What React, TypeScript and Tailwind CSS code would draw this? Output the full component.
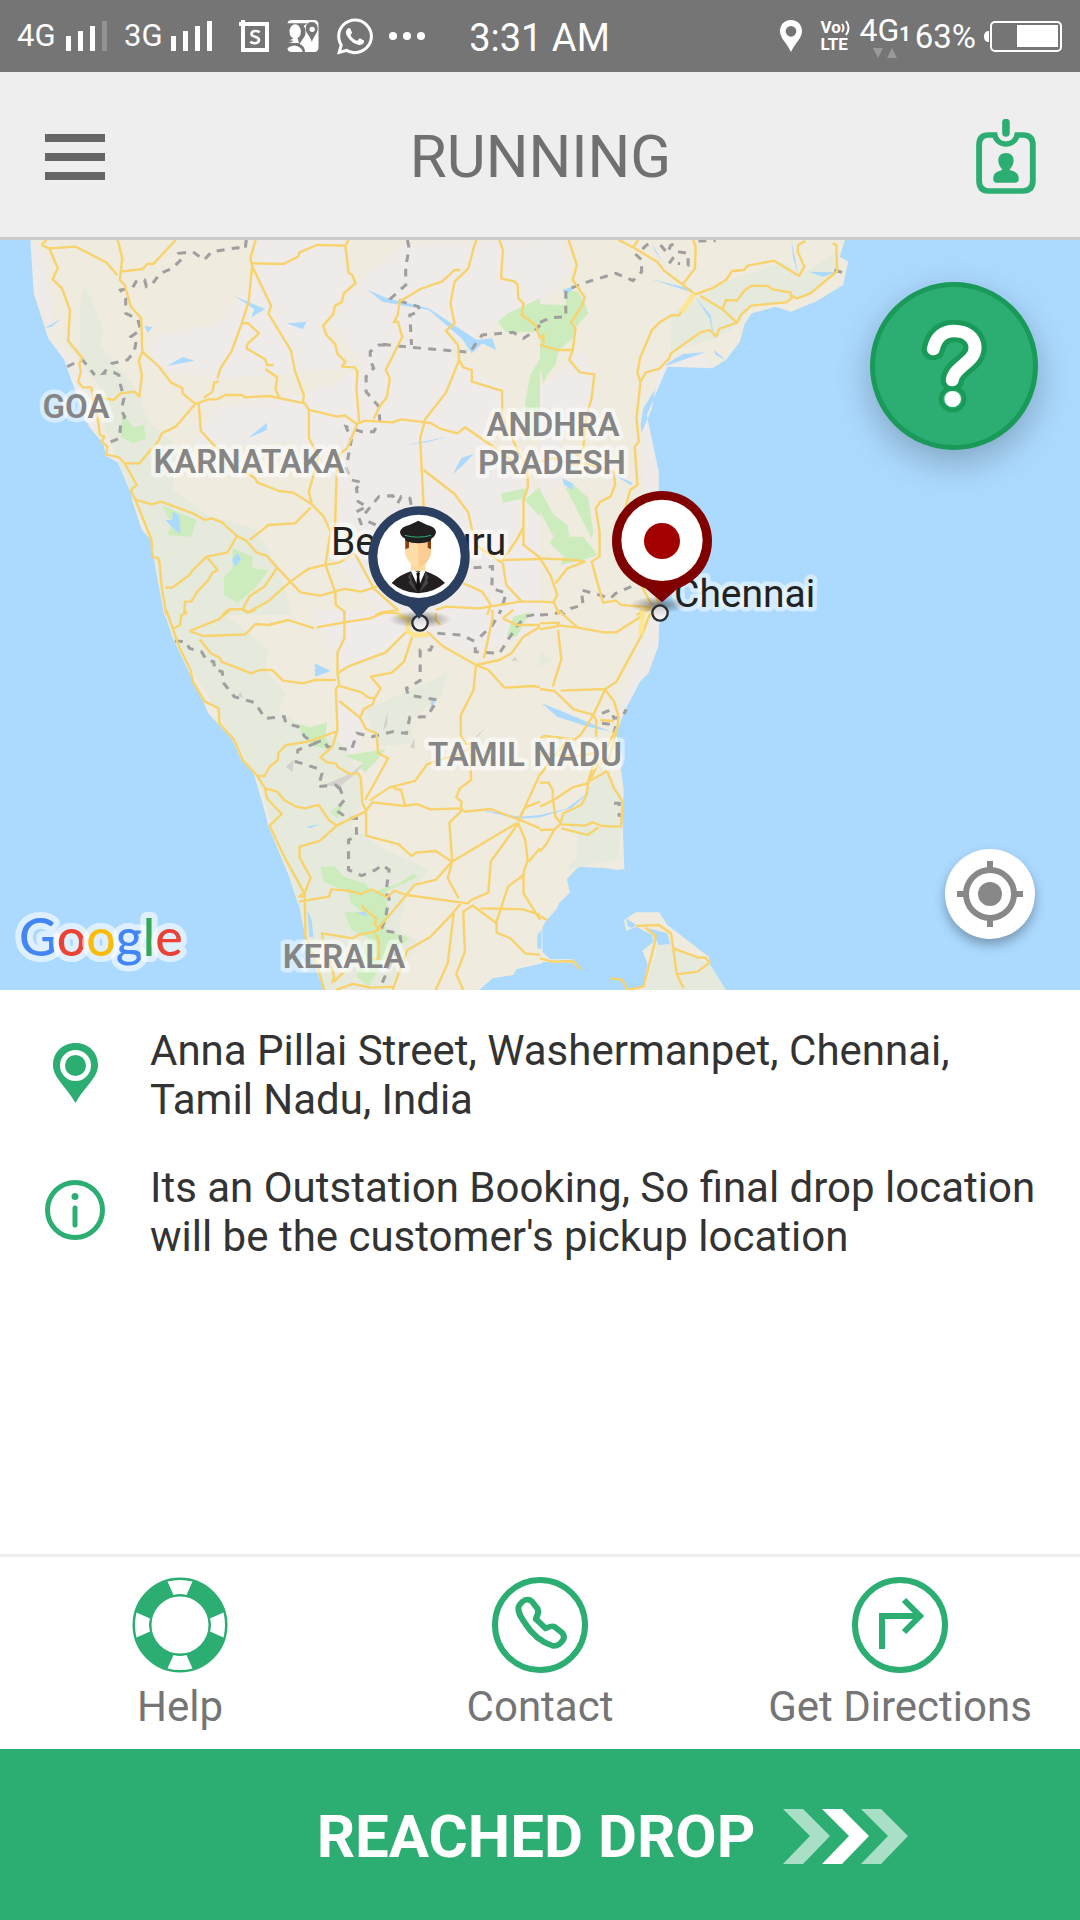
import type { ReactNode } from "react";
import { FaWhatsapp } from "react-icons/fa";

const GREEN = "#2cae73";

function Bars({ faded = false }: { faded?: boolean }) {
  return (
    <svg className="h-[30px] w-[42px]" viewBox="0 0 42 30" fill="#fff" aria-hidden="true">
      <rect x="0" y="15" width="5" height="15" />
      <rect x="12" y="10" width="5" height="20" />
      <rect x="24" y="5" width="5" height="25" />
      <rect x="36" y="0" width="5" height="30" fillOpacity={faded ? 0.22 : 1} />
    </svg>
  );
}

function StatusBar() {
  return (
    <div className="flex h-[72px] shrink-0 items-center bg-[#757575] pr-[18px] pl-[17px] text-white">
      <div className="flex flex-1 items-center">
        <span className="w-[49px] text-[31px] leading-9">4G</span>
        <Bars faded />
        <span className="ml-4 w-[47px] text-[31px] leading-9">3G</span>
        <Bars />
        <svg className="ml-[26px] h-8 w-[30px]" viewBox="0 0 30 32" aria-hidden="true">
          <path d="M4 0V4M0 4H28V30H4V0" fill="none" stroke="#fff" strokeWidth="4" />
          <path d="M20.500 12.500C19 10.200 12.500 10.300 12.500 14C12.500 17.700 20 16 20 20C20 24 13 24 11.500 21.500" fill="none" stroke="#fff" strokeWidth="2.600" />
        </svg>
        <svg className="ml-[18px] h-8 w-8" viewBox="0 0 93 96" aria-hidden="true">
          <path d="M12 0H80Q93 0 93 14V82Q93 96 80 96H52Q54 80 36 71Q42 64 53 46Q57 26 48 18L60 10H0Q2 0 12 0Z" fill="#fff" />
          <ellipse cx="23" cy="35" rx="17" ry="22" fill="#fff" />
          <path d="M17 55H31L34 69H0Q14 68 17 62L0 59Q12 62 17 55Z" fill="#fff" />
          <path d="M0 84Q20 70 36 82Q46 90 45 96H10Q0 94 0 84Z" fill="#fff" />
          <path d="M73 6C53 6 52 29 58 38C67 50 70 56 73 66C76 56 80 50 87 38C95 26 90 6 73 6Z" fill="#757575" />
          <circle cx="74" cy="28" r="8" fill="#fff" />
        </svg>
        <FaWhatsapp className="ml-[18px] h-[41px] w-[36px]" aria-hidden="true" />
        <svg className="ml-4 h-2 w-9" viewBox="0 0 36 8" fill="#fff" aria-hidden="true">
          <circle cx="4" cy="4" r="4" />
          <circle cx="18" cy="4" r="4" />
          <circle cx="32" cy="4" r="4" />
        </svg>
      </div>
      <time className="pt-1 text-[38px] leading-10">3:31 AM</time>
      <div className="flex flex-1 items-center justify-end">
        <svg className="h-8 w-[22px]" viewBox="0 0 66 96" aria-hidden="true">
          <path fillRule="evenodd" d="M33 0C12 0 0 15 0 34C0 55 20 68 33 96C46 68 66 55 66 34C66 15 54 0 33 0ZM33 18A16 16 0 1 1 33 50A16 16 0 1 1 33 18Z" fill="#fff" />
        </svg>
        <div className="ml-[18px] flex w-8 flex-col text-[17px] leading-[17px] font-bold">
          <span className="flex items-center">
            Vo
            <svg className="h-4 w-[9px]" viewBox="0 0 9 16" fill="none" stroke="#fff" strokeWidth="2" aria-hidden="true">
              <path d="M1 4Q4 8 1 12M5 1Q10 8 5 15" />
            </svg>
          </span>
          <span>LTE</span>
        </div>
        <div className="ml-[7px] flex flex-col items-center">
          <span className="flex items-baseline text-[32px] leading-8">
            4G<span className="text-[20px] font-bold">1</span>
          </span>
          <svg className="-mt-0.5 h-[10px] w-6" viewBox="0 0 24 10" fill="#999" aria-hidden="true">
            <path d="M0 0H10L5 10ZM14 10H24L19 0Z" />
          </svg>
        </div>
        <span className="ml-1 pt-0.5 text-[33px] leading-9">63%</span>
        <svg className="ml-2 h-[31px] w-[78px]" viewBox="0 0 78 31" aria-hidden="true">
          <path d="M5 10Q0 10 0 15.500T5 21Z" fill="#fff" />
          <rect x="7" y="1" width="70" height="29" rx="4" fill="none" stroke="#fff" strokeWidth="2" />
          <rect x="33" y="4" width="41" height="22" fill="#fff" />
        </svg>
      </div>
    </div>
  );
}

function Header() {
  return (
    <header className="flex h-[168px] shrink-0 items-center justify-between border-b-3 border-[#cbcbcb] bg-[#eeeeee] pt-1 pr-11 pl-[45px]">
      <button type="button" aria-label="Menu" className="flex flex-col gap-[11px]">
        <span className="h-2 w-[60px] bg-[#666666]" />
        <span className="h-2 w-[60px] bg-[#666666]" />
        <span className="h-2 w-[60px] bg-[#666666]" />
      </button>
      <h1 className="text-[60px] leading-none text-[#707070]">RUNNING</h1>
      <button type="button" aria-label="Driver profile">
        <svg className="h-[75px] w-[60px]" viewBox="0 0 60 75">
          <g transform="scale(.3444 .3333)">
            <path d="M61 46H36Q9 46 9 76V182Q9 214 36 214H136Q165 214 165 182V76Q165 46 136 46H113" transform="translate(0 2)" fill="none" stroke={GREEN} strokeWidth="17" />
            <path d="M54 42C58 86 116 86 120 42" fill="none" stroke={GREEN} strokeWidth="17" />
            <path d="M87 10V42" stroke="#eeeeee" strokeWidth="50" strokeLinecap="round" />
            <path d="M87 10V42" stroke={GREEN} strokeWidth="22" strokeLinecap="round" />
            <path d="M87 102C68 102 64 116 65 128C66 140 74 148 77 152C66 157 50 158 50 180Q50 191 60 191H114Q124 191 124 180C124 158 108 157 97 152C100 148 108 140 109 128C110 116 106 102 87 102Z" fill={GREEN} />
          </g>
        </svg>
      </button>
    </header>
  );
}

/* The map is drawn in four tiles that share one stroke style. */
const NW = "translate(0 235) scale(.3444 .3333)";
const NE = "translate(540 235) scale(.3444 .3333)";
const SW = "translate(0 610) scale(.3444 .3333)";
const SE = "translate(540 610) scale(.3444 .3333)";

const land = [
  { t: NW, d: "M88 0L95 60L108 140L98 175L140 310L187 375L207 435L245 485L258 575L300 625L308 662L345 685L375 740L385 800L412 885L438 915L455 1020L478 1145H1575V0Z" },
  { t: NE, d: "M-5 0H890L870 65L895 80L880 150L800 200L728 230L685 215L615 235L595 265L580 320L540 375L500 400L478 352L415 357L370 385L350 410L333 465L300 520L292 570L300 640L325 710L325 900L340 1100L347 1145H-5Z" },
  { t: SW, d: "M475 0L500 80L590 275L605 310L675 390L700 450L735 485L765 590L780 650L840 800L865 880L880 900L890 1000L925 1090L942 1145H1386L1430 1105L1490 1095L1500 1078L1575 1060V0Z" },
  { t: SE, d: "M-5 0H348L343 110L315 190L290 215L252 290L220 370L240 440L235 480L243 540L240 640L245 778L222 780L195 775L112 770L78 808L87 848L55 880L50 895L20 930L-5 970ZM-5 1015L30 1048L95 1048L118 1080L95 1060L-5 1055ZM244 930L278 907L346 907L370 945L490 1040L495 1070L540 1145H255L300 1130L312 1060L297 1022L330 995L325 975L280 950L250 962Z" },
];

const pale = [
  { t: NW, d: "M720 15H1000L1020 140L940 260L1000 400L780 420L640 430L440 400L440 310L640 260L760 90ZM1060 120L1170 30L1568 15V190L1300 350L1480 480L1400 620L1568 780V1140H1110L960 960L1000 760L840 620L560 640L620 520L880 480L1060 400L960 260ZM88 15L130 60L160 310L240 400L290 600L250 560L187 375L98 175Z" },
  { t: NE, d: "M0 15H60L90 120L0 210ZM0 460L70 400L130 340L170 520L60 600L80 720L0 800ZM325 520L345 400L480 352L500 400L370 395L310 540L345 710V1130L325 1110L292 600Z" },
  { t: SW, d: "M900 0H1568V60L1380 130L1200 80L990 180ZM980 270L1050 330L1050 420L980 440Z" },
  { t: SE, d: "M330 0H348L343 110L252 290L230 300Z" },
];

const sage = [
  { t: NW, d: "M250 155L300 280L290 330L400 470L430 560L520 640L500 760L600 840L740 880L800 980L850 1140H480L440 910L390 800L345 690L300 560L300 470L170 290L230 340L235 180Z" },
  { t: NE, d: "M380 240L540 140L710 80L760 120L860 50L870 110L760 190L610 215L575 270L510 310L380 350Z" },
  { t: SW, d: "M480 0H640L780 120L770 180L830 250L810 300L880 350L970 380L1010 420L1060 540L1020 650L1120 720L1250 780L1180 850L1160 960L1220 1000L1120 1140H940L890 1000L865 870L740 490L680 390L500 80ZM1060 300L1300 190L1280 260L1190 330L1200 400L1100 410Z" },
  { t: SE, d: "M0 120L35 150L0 170ZM60 630L190 480L240 560L235 690L228 745L75 780L110 740V670ZM340 1005H385L495 1065L540 1140H300L335 1040Z" },
];

const forest = [
  { t: NW, d: "M1445 260L1475 235L1568 190V290L1470 292ZM1568 370L1540 420L1525 500L1530 620L1568 600ZM355 530L385 575L418 570L423 612L385 625L350 605ZM1455 775L1525 760V790L1460 803ZM1568 755L1523 795L1568 845ZM470 810L570 855L555 905L485 900L500 870ZM675 940L735 965L733 1000L780 1005L740 1060L690 1103L650 1080V1025L675 1000Z" },
  { t: NE, d: "M0 208L75 210V165L110 170L130 205L140 235L105 275L95 310L55 345L45 390L20 420L10 445L0 400ZM0 765L40 840L80 870L85 905L125 905L168 960L125 975L60 990L70 965L28 925L40 905L0 830ZM75 760L95 745L140 790L155 890L150 910Z" },
  { t: SW, d: "M862 340L900 352L950 337L945 380L965 420L910 410L875 370ZM1000 437L1120 417L1095 450L1060 487L1040 470L1055 460ZM930 772L970 768L1000 800L1060 820L1080 845L1160 820L1200 790L1215 800L1120 845L1125 900L1120 960L1190 985L1120 1040L1070 1130L1035 1100L1050 1040L1070 985L1020 960L1000 905L1050 905L1020 880L1010 845L940 815ZM965 600L1000 575L980 625L960 610ZM1490 20L1540 5L1500 80L1470 85Z" },
];

const hills = "M830 470L853 448L850 487ZM940 525L1020 490L1055 460L1035 490L985 530ZM1115 345L1125 305V345L1112 362ZM1190 410L1205 385L1203 418ZM1380 380L1412 352L1385 382ZM1485 152L1495 140L1503 152ZM690 255L700 245L705 265Z";

const lakes = [
  { t: NW, d: "M680 183L770 222L730 247L738 222ZM1068 165L1120 188L1245 220L1310 265L1385 315L1430 310L1440 345L1400 325L1370 355L1340 310L1245 225L1110 200ZM832 265L880 262L970 222L890 258L880 283ZM485 393L530 366L565 377ZM420 273L443 276L428 293ZM722 608L775 563V585ZM1315 717L1340 668L1375 657L1345 690ZM502 830L520 840L525 895L508 885L480 855L500 855ZM690 955L700 970L685 995L673 975ZM130 280L180 250L150 275ZM1180 630L1300 605L1240 622Z" },
  { t: NE, d: "M65 165L110 150L75 180ZM320 132L440 162L440 172ZM450 185L495 240L508 325L492 250ZM65 730L95 745V765L70 750ZM730 15L750 120L735 70ZM780 110L860 112L820 125ZM505 345L540 375L510 360ZM325 25L355 80L335 50ZM160 690L270 745L265 750Z" },
  { t: SW, d: "M914 160L960 183L915 200ZM1252 265L1265 270L1250 300ZM890 650L930 642L900 655ZM898 820L935 807ZM893 900L905 930L910 980L898 982ZM1435 250L1490 262ZM1035 908L1060 905L1070 920ZM1560 975L1572 960V1018L1560 1015ZM1375 595L1510 620L1568 615V622L1500 627Z" },
  { t: SE, d: "M5 280L60 302L205 365L140 350L50 320ZM0 615L75 597L150 540L90 595L0 622ZM250 925L280 945L268 953L255 950ZM315 955L370 970L378 1003L345 1005Z" },
];

const roads = [
  { t: NW, d: "M120 30L143 40L220 35L310 83L340 120M143 40L168 100L153 133L180 160L203 225L198 318L240 370L230 385L235 410L227 440L240 457H265L270 490L285 560L290 600L303 605L295 620L312 635L308 658L345 667L362 685L397 750L380 765L395 800L440 915L443 965L462 972L470 1060L483 1140M120 30L135 15M342 15L355 70L348 135L362 150L380 215L410 250L413 350L403 378L412 420L405 485L390 470L350 475L330 495L290 487M350 110L415 102L427 87H445L510 15M413 350L460 393L497 443L530 460V475L567 507L605 493H630L655 480H703L712 487L780 483L885 505L897 525L980 545L1000 541L1037 567L1060 557L1140 562L1165 553L1235 562L1252 565L1280 582L1328 595L1350 577L1460 655L1500 690M742 15L727 70L732 93L722 200L702 265L672 350L640 400L632 430M732 93L787 212L780 237L845 347L857 410L882 480L880 505M702 265L720 264L752 295L720 325L715 340L770 373L775 390H795M770 402L805 427L800 463L812 490M732 85L823 87L865 65L870 52L920 30L1003 32L1012 15M1003 32L1012 113L1023 120L1032 145L998 175L993 200L972 213L968 237L938 272L948 300L973 327L980 357L1003 380L993 395L1030 397L1038 410L1035 460L1043 560M635 440L622 442L617 470L592 488M567 507L510 575L470 595L460 617L405 685H362M577 507L583 587L665 680L740 730L747 742L810 768L852 773L905 808L940 845L960 890L945 990L973 1070L975 1110L1000 1130V1140M897 525V610L925 665L897 770L905 808M1037 567L1008 640L988 655L978 700L973 865L958 890M1085 552L1103 513L1123 487L1132 430L1120 405L1168 305L1155 260L1143 262L1155 240L1160 200L1220 162L1283 140L1320 105H1337M1383 15L1375 40L1360 100L1320 140L1308 205L1320 265L1295 287L1330 330L1333 375L1295 473L1235 552L1220 610L1230 815M1333 375L1345 397L1370 405V440L1458 468V540L1500 640L1530 700L1533 755L1520 795V930L1568 968M1450 15L1460 45L1455 130L1495 140L1503 150L1505 190L1520 205L1515 240L1555 270L1568 310M1230 705L1320 777L1360 833L1380 930L1460 985L1470 1050L1515 1100M1568 972L1460 975L1500 915L1520 875M395 795L440 808L468 800L560 835L595 855L615 850L645 862L688 903L715 917L745 953L775 963L805 998L843 1040L872 1072L930 1082L1000 1062L1048 1070L1095 1055M725 915L780 870L857 865L902 818M688 903L660 953L600 965L560 1005L550 1020L500 1058H480M600 965L632 1005L617 1013L605 1035L573 1070L555 1100H537L535 1140M805 998L768 1055L725 1083L705 1122L665 1123L645 1140M705 1122L720 1132L780 1098L843 1040L895 1002L945 990L985 983L1030 955L1085 1060L1155 1125L1110 1132L1090 1140M1345 1045L1400 1070L1425 1110L1415 1140M1265 1125L1295 1115L1390 1120L1510 1100H1568" },
  { t: NE, d: "M83 15L107 90L95 135L130 187L122 212L90 262L103 280L95 345L85 375L115 412L158 418L150 490L135 540L125 645M0 330L50 345H95M0 310L10 300V325M228 15L270 37L340 80L360 107L412 147L450 178M285 15L270 37M445 15L452 35L450 100L415 147M450 178L500 160L540 135L558 108L592 105L603 92L680 77L752 123L768 95L748 50L750 30L770 18M465 182L530 223L572 263L520 282L512 305L493 285L465 293L380 355L375 370L345 402L308 412L292 440L283 415L290 370L325 285L350 260L383 240L403 242L445 175M530 223L540 195L572 197L595 165L615 152L662 153L675 163L727 172L730 190L715 202L613 212L583 240L572 263M730 182L747 190L785 175L863 108L860 30L850 25M292 440L280 550L287 620L275 635L283 750L262 765L245 830L255 980L325 1110M0 680L40 670L90 688L130 685L215 712L218 750L205 785L175 800L162 820L173 890V965L150 980L183 1103L220 1097L235 1110L325 1118M0 970L100 975L130 980L80 1000L45 1045M0 970L30 1020L50 1080L40 1100L55 1140M0 1100L40 1102M325 1118L280 1140M330 1055L345 1110L325 1140M100 655L125 670L90 688" },
  { t: SW, d: "M483 0L503 60L520 110L553 180L560 215L595 275L635 295L637 340L680 390L705 450L745 495L770 535L805 545L825 570L860 590L885 595L925 585L955 630L978 647L1060 605L1082 577L1175 588L1210 582L1250 598L1338 595L1350 605L1425 597L1510 630L1568 655M770 535L775 565L818 612L783 647L825 740L883 848L868 860H885M500 58L523 45L527 15L540 10L537 0M550 63L635 28L668 0M550 63L590 78L712 73L742 42L780 45L837 30L912 55M705 0L720 8L742 0M920 52L1000 37L1075 25L1115 8L1160 10L1182 30M1000 0V85L980 127V190L985 225L975 237L980 360L965 410L930 442L950 457L975 460L980 470L1015 492L1040 490L1048 505L1052 580L1063 600V677L1158 703L1195 738L1208 728L1265 723L1312 755L1500 640M580 88L612 130L640 145L642 155L730 190L755 180H790L822 212L880 220L915 210H975M980 190L1010 170L1120 127L1185 60M985 228L1050 247L1070 263L1088 265L1105 235L1077 200L1138 188L1173 155L1197 80M985 273L1045 323L1063 357L1093 370L1098 430L1127 445L1060 570M1045 323L1057 297L1082 283L1088 265M980 363L895 395L830 405L808 430L807 450L783 470L768 498H750M1073 572L1130 533L1205 513L1240 463L1290 445L1340 430L1380 400L1350 402L1338 375V315L1375 240L1382 165L1285 108L1240 65M1382 165L1418 180L1465 233L1548 228L1568 232M1382 165L1450 150L1485 130L1520 80L1568 50M1143 535L1165 540L1177 588M1365 430L1368 510L1335 535L1325 562L1340 575L1338 605L1305 638L1313 755L1300 805L1332 865M1312 755L1265 810L1203 825L1180 855L1090 965L1040 975L1025 985L935 970L938 990M978 647L928 693L870 710V743L902 803L885 848L887 980L925 1080L942 1140M868 875L955 860L962 838L1010 842L1048 852L1078 838L1123 862L1145 842L1180 855L1358 880M1052 885L1055 895L1092 925L1088 945L1105 955L1090 965M1320 905L1250 980L1183 1020L1140 1140M1338 880L1318 905L1300 1060L1265 1140M1375 885L1345 905L1350 1025L1325 1092L1345 1140M1358 880L1368 870L1418 848L1425 755L1505 640L1525 690L1532 750L1520 790V850L1568 930M1520 795L1475 830L1442 935V968L1482 985L1525 1030L1568 1035M1395 895L1520 898L1568 915M1370 885L1442 940M1505 635L1560 510L1568 490M1505 630L1520 600L1530 590L1568 575M1535 755L1568 715M935 985L970 1100L965 1120M970 1115L1000 1085M975 1140L1025 1122L1075 1133L1140 1130M1090 975L1100 990V1045L1075 1050M1430 0V25L1405 145M1460 25L1500 45H1568M1265 10V30L1280 45M1460 25L1490 0" },
  { t: SE, d: "M0 58L60 47L110 53L185 67H222L300 15M0 40L55 38L50 47M52 0L110 53M52 60L62 147L37 230M320 10L298 70L222 215L190 237L60 242M190 237L155 315L118 375L102 388L80 385L12 378L0 385M0 237L42 243L98 298L155 315L163 330V380M190 240L215 275L228 320L225 350L200 450L155 465L138 520L95 532L40 570L0 590M175 330L215 333M225 350L140 520L135 555L120 585L68 610L60 638M195 483L140 515M195 483L215 535L240 575L235 650L180 648L153 637L130 647L62 643L45 620L37 565V540L25 518H0M62 655L138 675L170 652M62 640L42 658L20 700L0 725M42 658L0 660M0 430L100 440L180 425M0 495L40 440L80 390M0 918L20 930M0 1045L35 1055L95 1053L118 1078M280 948L345 945L380 970L387 1015L397 1093L417 1135M305 953L335 977L333 1000L300 1130L255 1140L238 1110L205 1105M387 1015L460 1043L480 1042L492 1058L458 1085L397 1093" },
];

const borders = [
  { t: NW, d: "M715 15L712 42L690 38L615 50L592 75L560 50L520 55L530 70L500 100L465 115L440 150L425 155L420 135L395 140L385 158L350 165L365 190L365 235L400 252L408 285L380 305L395 320L390 350L370 375L325 385L300 415L330 412L345 420L350 450L360 490L352 525L362 545L350 570L347 610L310 625M195 395L225 380L240 375L275 420M1183 15L1188 40L1178 95V150L1135 190L1215 215L1218 230L1190 240L1195 330M1112 328L1195 337L1365 352L1385 320L1400 300L1490 292L1520 310L1550 290L1568 270M1120 330L1100 330L1075 350V375L1085 400L1063 425V470L1100 515L1103 560L1085 590L1050 590L1005 575L1020 615L1005 700L1020 735L1050 742L1035 760L1040 800L1065 815L1035 830L1050 870M1060 835L1100 785L1140 782L1155 805L1165 785L1190 790L1195 815M1070 860L1095 872M1375 998L1430 995L1428 1060L1470 1075L1455 1125" },
  { t: NE, d: "M0 262L30 248L75 245V165L140 140L220 115L270 137L295 110V75L280 60L310 30L330 20M350 30L370 55L380 30L405 25M375 85L400 50L430 55V90L400 85M460 18L510 17M855 105L885 115M265 1055L220 1075L205 1090L155 1075L120 1065L125 1110L90 1120L65 1140" },
  { t: SW, d: "M508 93L540 95L550 115L585 125L600 150L620 155L625 180L645 185L650 220L680 260L740 278L770 325L825 320L830 340L865 350L885 380L915 400L865 420L860 455L920 475L935 490L925 530L975 525L985 535M910 400L940 390L950 410L1020 420L1037 370L1080 380L1140 365L1180 370L1190 322L1240 320L1270 270L1185 255L1180 235L1220 212L1220 120L1250 120L1260 95M985 530L1000 570L975 600L1010 625H1035V680L1012 690V780L1050 797L1090 780L1110 765L1130 780L1120 850L1130 865L1118 930L1105 960L1160 970L1165 1000L1130 1070L1105 1130M1270 70L1340 75L1380 95V125L1450 130L1500 50L1525 20L1568 10M1395 80L1430 45L1455 0" },
  { t: SE, d: "M180 310L205 300L215 325L240 320L250 298M180 340L220 345L215 370M215 580H230V620M0 15L40 12L75 0" },
];

function MapArt() {
  return (
    <svg className="absolute inset-0 h-full w-full bg-[#acdaff]" viewBox="0 240 1080 750" preserveAspectRatio="xMidYMid slice" role="img" aria-label="Map of southern India">
      <defs>
        <radialGradient id="pinShade">
          <stop offset="0" stopColor="#333" stopOpacity=".6" />
          <stop offset="1" stopColor="#333" stopOpacity="0" />
        </radialGradient>
        <linearGradient id="cityDot" x1="0" x2="0" y1="0" y2="1">
          <stop offset="0" stopColor="#ccc" />
          <stop offset="1" stopColor="#fff" />
        </linearGradient>
      </defs>
      {land.map((s) => <path key={s.t} transform={s.t} d={s.d} fill="#efebdf" />)}
      {pale.map((s) => <path key={s.t} transform={s.t} d={s.d} fill="#eeebe8" />)}
      {sage.map((s) => <path key={s.t} transform={s.t} d={s.d} fill="#e6eadd" />)}
      {forest.map((s) => <path key={s.t} transform={s.t} d={s.d} fill="#cdecbe" />)}
      <path transform={SW} d={hills} fill="#d5d2ce" />
      {lakes.map((s) => <path key={s.t} transform={s.t} d={s.d} fill="#acdaff" />)}
      {borders.map((s) => <path key={s.t} transform={s.t} d={s.d} fill="none" stroke="#a09f9f" strokeWidth="9" strokeDasharray="23 21" />)}
      {roads.map((s) => <path key={s.t} transform={s.t} d={s.d} fill="none" stroke="#f8d26b" strokeWidth="7" strokeLinejoin="round" />)}
      <path d="M398 615L408 619L408 632L415 635H428M643 607L641 635M681 312L694 294" fill="none" stroke="#fee58f" strokeWidth="5" />
      <g fill="#858585" stroke="#fff" strokeOpacity=".5" strokeWidth="9" strokeLinejoin="round" paintOrder="stroke" textAnchor="middle" fontSize="33" fontWeight="600">
        <text x="76" y="418">GOA</text>
        <text x="249" y="473">KARNATAKA</text>
        <text x="553" y="436">ANDHRA</text>
        <text x="552" y="474">PRADESH</text>
        <text x="525" y="766">TAMIL NADU</text>
        <text x="344" y="968">KERALA</text>
      </g>
      <g fill="#222" stroke="#fff" strokeOpacity=".5" strokeWidth="9" strokeLinejoin="round" paintOrder="stroke" fontSize="39">
        <text x="331" y="555">Bengaluru</text>
        <text x="674" y="607">Chennai</text>
      </g>
      <text x="19" y="956" fontSize="52" stroke="#fff" strokeOpacity=".6" strokeWidth="12" strokeLinejoin="round" paintOrder="stroke" className="font-['Lato',sans-serif] font-medium">
        <tspan fill="#4285f4">G</tspan><tspan fill="#ea4335">o</tspan><tspan fill="#fbbc05">o</tspan><tspan fill="#4285f4">g</tspan><tspan fill="#34a853">l</tspan><tspan fill="#ea4335">e</tspan>
      </text>
      <g transform="translate(320 470) scale(.33333)">
        <ellipse cx="300" cy="448" rx="95" ry="26" fill="url(#pinShade)" />
        <circle cx="300" cy="459" r="23" fill="url(#cityDot)" stroke="#2c2c2c" strokeWidth="7" />
        <path d="M240 392Q272 408 297 447Q322 408 354 392Z" fill="#2b3f61" />
        <circle cx="297" cy="261" r="152" fill="#2b3f61" />
        <circle cx="297" cy="259" r="125" fill="#fff" />
        <path d="M273 260H316V310L295 340L273 310Z" fill="#fcd9a0" />
        <path d="M255 210H333V250Q325 285 295 292Q263 285 255 250Z" fill="#ffdda8" />
        <path d="M295 200H333V250Q325 285 295 292Z" fill="#fbcd95" />
        <path d="M256 205H267V233L256 238ZM323 205H333V238L323 233Z" fill="#8c3e12" />
        <path d="M240 185Q243 170 270 164L295 152L320 164Q346 170 348 185Q347 198 335 205L332 213Q295 226 257 213L254 205Q241 198 240 185Z" fill="#221f20" />
        <path d="M254 196Q295 207 333 196" fill="none" stroke="#2cae73" strokeWidth="3" />
        <path d="M215 339Q235 316 273 304H316Q352 315 375 339Q340 368 295 370Q248 368 215 339Z" fill="#231f20" />
        <path d="M273 304L295 352L316 304L306 300L295 310L282 300Z" fill="#fff" />
        <path d="M289 309H300L298 320L301 352L295 362L288 352L291 320Z" fill="#111" />
        <path d="M273 304L264 322L270 330L266 338L292 368L275 330ZM316 304L326 322L320 330L325 338L298 368L315 330Z" fill="#45454a" />
        <ellipse cx="1015" cy="405" rx="85" ry="26" fill="url(#pinShade)" />
        <circle cx="1020" cy="429" r="23" fill="url(#cityDot)" stroke="#2c2c2c" strokeWidth="7" />
        <path d="M965 345L1026 397L1085 345Z" fill="#800000" />
        <circle cx="1026" cy="213" r="150" fill="#800000" />
        <circle cx="1026" cy="211" r="122" fill="#fff" />
        <circle cx="1026" cy="213" r="54" fill="#a30000" />
      </g>
    </svg>
  );
}

function MapPanel() {
  return (
    <section className="relative h-[750px] shrink-0 overflow-hidden">
      <MapArt />
      <button type="button" aria-label="Ask a question" className="absolute top-[42px] right-[42px] size-42 rounded-full border-5 border-[#1a9a58] bg-[#2cae73] shadow-[0_12px_36px_rgba(0,0,0,0.25)]">
        <svg className="h-full w-full" viewBox="5 5 158 158" fill="none" strokeLinecap="round">
          <g transform="scale(.3444 .3333) translate(-958 -141)">
            <g stroke="#1a9a58" strokeWidth="68">
              <path d="M1142 342C1150 305 1172 288 1202 288C1240 288 1263 310 1263 338C1263 382 1202 395 1197 435" />
              <circle cx="1198" cy="492" r="6" />
            </g>
            <path d="M1142 342C1150 305 1172 288 1202 288C1240 288 1263 310 1263 338C1263 382 1202 395 1197 435" stroke="#fff" strokeWidth="38" />
            <circle cx="1198" cy="492" r="24" fill="#fff" />
          </g>
        </svg>
      </button>
      <button type="button" aria-label="My location" className="absolute right-[45px] bottom-[51px] size-[90px] rounded-full bg-white shadow-[0_6px_12px_rgba(0,0,0,0.3)]">
        <svg className="h-full w-full" viewBox="0 0 90 90" fill="none" stroke="#888" strokeWidth="6">
          <circle cx="45" cy="45" r="24" />
          <circle cx="45" cy="45" r="12" fill="#888" stroke="none" />
          <path d="M45 12V21M45 69V78M12 45H21M69 45H78" />
        </svg>
      </button>
    </section>
  );
}

function InfoRow({ icon, children }: { icon: ReactNode; children: ReactNode }) {
  return (
    <div className="flex items-center gap-[45px]">
      <div className="flex w-[60px] shrink-0 justify-center pb-1">{icon}</div>
      <p className="text-[42px] leading-[49px] text-[#333333]">{children}</p>
    </div>
  );
}

function Action({ label, icon }: { label: string; icon: ReactNode }) {
  return (
    <button type="button" className="flex flex-col items-center gap-[9px] pt-5 pb-[18px] text-[42px] leading-[49px] text-[#757575]">
      <svg className="size-24" viewBox="0 0 96 96" fill="none" stroke={GREEN} aria-hidden="true">
        {icon}
      </svg>
      {label}
    </button>
  );
}

export default function App() {
  return (
    <div className="flex min-h-screen flex-col bg-white font-['Roboto',sans-serif]">
      <StatusBar />
      <Header />
      <MapPanel />
      <main className="flex flex-1 flex-col gap-[39px] py-9 pr-10 pl-[45px]">
        <InfoRow
          icon={
            <svg className="h-[60px] w-[45px]" viewBox="0 0 45 60" aria-hidden="true">
              <path d="M22.500 0C9 0 0 10 0 22C0 35 13 43 22.500 60C32 43 45 35 45 22C45 10 36 0 22.500 0Z" fill={GREEN} />
              <circle cx="22.500" cy="22.500" r="13" fill={GREEN} stroke="#fff" strokeWidth="5" />
            </svg>
          }
        >
          Anna Pillai Street, Washermanpet, Chennai, Tamil Nadu, India
        </InfoRow>
        <InfoRow
          icon={
            <svg className="size-[60px]" viewBox="0 0 60 60" fill="none" stroke={GREEN} strokeWidth="5" strokeLinecap="round" aria-hidden="true">
              <circle cx="30" cy="30" r="27.500" />
              <path d="M30 28V45" />
              <circle cx="30" cy="16.500" r="3.500" fill={GREEN} stroke="none" />
            </svg>
          }
        >
          Its an Outstation Booking, So final drop location will be the customer's pickup location
        </InfoRow>
      </main>
      <nav className="grid shrink-0 grid-cols-3 border-t-3 border-[#eeeeee]">
        <Action
          label="Help"
          icon={
            <>
              <circle cx="48" cy="48" r="38" strokeWidth="19" />
              <path d="M35.500 4.500Q48 1.500 60.500 4.500L54.500 18Q48 16 41.500 18ZM35.500 91.500Q48 94.500 60.500 91.500L54.500 78Q48 80 41.500 78ZM4.500 35.500Q1.500 48 4.500 60.500L18 54.500Q16 48 18 41.500ZM91.500 35.500Q94.500 48 91.500 60.500L78 54.500Q80 48 78 41.500Z" fill="#fff" stroke="none" />
            </>
          }
        />
        <Action
          label="Contact"
          icon={
            <>
              <circle cx="48" cy="48" r="45" strokeWidth="6" />
              <g transform="scale(.3571 .3333) translate(-1215 -114)">
                <path d="M1316 182C1305 180 1293 193 1289 205C1287 222 1297 236 1309 255C1327 286 1356 310 1384 320C1398 323 1407 314 1414 303C1420 291 1414 282 1404 275L1391 264C1380 257 1372 266 1365 268L1338 240C1340 230 1348 222 1343 210L1331 193C1327 186 1322 183 1316 182Z" strokeWidth="17" strokeLinejoin="miter" />
              </g>
            </>
          }
        />
        <Action
          label="Get Directions"
          icon={
            <>
              <circle cx="48" cy="48" r="45" strokeWidth="6" />
              <path d="M30 72V39H67M52 23L68 39L52 55" strokeWidth="6" />
            </>
          }
        />
      </nav>
      <button type="button" className="grid h-[171px] shrink-0 grid-cols-[1fr_auto_1fr] items-center bg-[#2cae73] pt-1 pr-2 text-[60px] leading-none font-bold text-white">
        <span className="col-start-2">REACHED DROP</span>
        <svg className="ml-7 h-[56px] w-[126px]" viewBox="0 0 126 56" fill="#fff" aria-hidden="true">
          <path d="M0 0H20L47 27L20 55H0L27 27Z" fillOpacity=".6" />
          <path d="M39 0H59L86 27L59 55H39L66 27Z" />
          <path d="M78 0H98L125 27L98 55H78L105 27Z" fillOpacity=".6" />
        </svg>
      </button>
    </div>
  );
}
